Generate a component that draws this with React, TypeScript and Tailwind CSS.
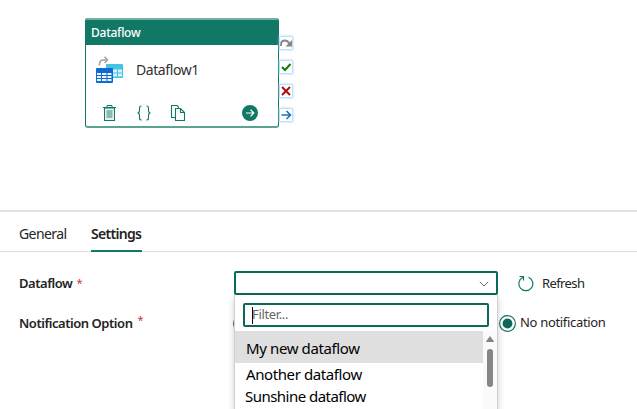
import type { ReactNode } from 'react';

const GREEN = '#117865';

function Port({ children }: { children: ReactNode }) {
  return (
    <div className="flex h-[12px] w-[12px] items-center justify-center bg-white shadow-[0_0_2px_1px_#a3d0f7]">
      <svg className="shrink-0" width="12" height="12" viewBox="0 0 12 12" fill="none">{children}</svg>
    </div>
  );
}

function DataflowIcon() {
  return (
    <svg width="30" height="28" viewBox="0 0 30 28" fill="none">
      <path d="M4.500 10.500V9Q4.500 5 8.500 5H12" stroke="#a3a3a3" strokeWidth="1.600" />
      <path d="M9.500 1.800 12.500 5l-3 3" stroke="#a3a3a3" strokeWidth="1.500" />
      <rect x="11" y="9" width="17" height="14" rx="1" fill="#45c3e6" />
      <path d="M18 14.500h4v3h-4zM23 14.500h4v3h-4zM18 18.500h4v3h-4zM23 18.500h4v3h-4z" fill="#d5f3fb" />
      <rect x="1" y="13" width="17" height="15" rx="1" fill="#0f6bd0" />
      <path d="M2 18h4v2H2zM7 18h4.500v2H7zM12.500 18h4v2h-4zM2 21h4v2H2zM7 21h4.500v2H7zM12.500 21h4v2h-4zM2 24h4v2H2zM7 24h4.500v2H7zM12.500 24h4v2h-4z" fill="#edf6ff" />
    </svg>
  );
}

function ActivityCard() {
  return (
    <div className="h-[110px] w-[194px] overflow-hidden rounded-[3px] border-x border-b-2 border-x-[#117865] border-b-[#5ba294] bg-white">
      <div className="h-[27px] border-t-2 border-[#75b0a4] bg-[#117865] pl-[5px] text-[12px] font-medium leading-[26px] tracking-[-0.25px] text-white">
        Dataflow
      </div>
      <div className="flex h-[49px] items-start pl-[9px] pt-[10px]">
        <DataflowIcon />
        <span className="ml-[11px] mt-[5px] text-[14px] leading-[20px] tracking-[-0.42px] text-[#323130]">Dataflow1</span>
      </div>
      <div className="flex h-[38px] items-center pl-[16px]">
        <svg width="15" height="18" viewBox="0 0 15 18" fill="none" stroke={GREEN}>
          <path d="M1 3.500h13M5 3V1.500h5V3" />
          <rect x="2.500" y="4" width="10" height="12.500" fill="#e4f1ee" />
          <rect x="4.500" y="6" width="6" height="8" fill="#88bcb2" stroke="none" />
        </svg>
        <svg className="ml-[19px]" width="16" height="18" viewBox="0 0 16 18" fill="none" stroke={GREEN} strokeWidth="1.100">
          <path d="M5.500 2Q3.500 2 3.500 4V6.500Q3.500 9 1.500 9Q3.500 9 3.500 11.500V14Q3.500 16 5.500 16M10.500 2Q12.500 2 12.500 4V6.500Q12.500 9 14.500 9Q12.500 9 12.500 11.500V14Q12.500 16 10.500 16" />
        </svg>
        <svg className="ml-[18px]" width="16" height="18" viewBox="0 0 16 18" fill="none" stroke={GREEN} strokeWidth="1.100">
          <path d="M5 13.500H1.500v-12H7l2 2" />
          <path d="M5.500 4.500h5l4 4v8h-9zM10.500 4.500v4h4" fill="white" />
        </svg>
        <svg className="ml-[56px]" width="16" height="16" viewBox="0 0 16 16" fill="none">
          <circle cx="8" cy="8" r="8" fill={GREEN} />
          <path d="M4 8h7.500M8.500 4.700 11.800 8l-3.300 3.300" stroke="white" strokeWidth="1.200" />
        </svg>
      </div>
    </div>
  );
}

function Label({ children, star }: { children: string; star: string }) {
  return (
    <div className="flex w-[215px] shrink-0 text-[13px] font-semibold leading-[20px] tracking-[-0.46px] text-[#242424]">
      {children}
      <span className={star}>*</span>
    </div>
  );
}

function Dropdown() {
  return (
    <div className="absolute left-0 top-[24px] h-[114px] w-[264px] border-x border-[#d0d0d0] bg-white pt-[8px] shadow-[0_3px_7px_rgba(0,0,0,0.2)]">
      <div className="ml-[8px] flex h-[24px] w-[246px] items-center rounded-[2px] border-2 border-[#0c695a] pl-[7px] text-[13px] text-[#666]">
        <span className="h-[17px] w-px bg-black" />
        <span className="-ml-px tracking-[-0.35px]">Filter...</span>
      </div>
      <div className="mt-[4px] flex">
        <div className="w-[248px] text-[15px] text-black">
          <div className="h-[32px] bg-[#dfdfdf] pl-[11px] leading-[35px] tracking-[-0.38px]">My new dataflow</div>
          <div className="h-[23px] pl-[11px] leading-[23px] tracking-[-0.4px]">Another dataflow</div>
          <div className="h-[23px] pl-[10px] leading-[21px] tracking-[-0.53px]">Sunshine dataflow</div>
        </div>
        <div className="flex w-[14px] flex-col items-center bg-[#fafafa] pt-[5px]">
          <svg width="8" height="6" viewBox="0 0 8 6"><path d="M4 0 8 5.500Q8 6 7.500 6H.5Q0 6 0 5.500z" fill="#858585" /></svg>
          <div className="mt-[7px] h-[38px] w-[6px] rounded-full bg-[#858585]" />
        </div>
      </div>
    </div>
  );
}

function Radio({ checked = false }: { checked?: boolean }) {
  return (
    <svg className="shrink-0" width="17" height="17" viewBox="0 0 17 17" fill="none">
      <circle cx="8.500" cy="8.500" r="7.900" stroke={checked ? '#0c695a' : '#555'} strokeWidth="1.100" />
      {checked && <circle cx="8.500" cy="8.500" r="4.900" fill="#0c695a" />}
    </svg>
  );
}

export default function App() {
  return (
    <div className="h-[409px] w-[637px] overflow-hidden whitespace-nowrap bg-white font-['Noto_Sans','Open_Sans',sans-serif]">
      <div className="relative h-[210px]">
        <div className="absolute left-[85px] top-[18px] flex">
          <ActivityCard />
          <div className="ml-[1px] flex flex-col gap-[12px] pt-[19px]">
            <Port>
              <path d="M1 9V7.500C1 5 2.500 3.500 5 3.500S8.500 5 9.500 7" stroke="#858585" strokeWidth="1.800" />
              <path d="M12 3v6.500H5.500z" fill="#858585" />
            </Port>
            <Port><path d="m2 6 3 3 5.500-6" stroke="#107c10" strokeWidth="2" /></Port>
            <Port><path d="m2 2 8 8m0-8-8 8" stroke="#b00c14" strokeWidth="2" /></Port>
            <Port><path d="M1.500 6h9M6.500 2l4 4-4 4" stroke="#1a72c4" strokeWidth="1.600" /></Port>
          </div>
        </div>
      </div>
      <div className="flex h-[42px] items-stretch border-b border-t-2 border-b-[#dedede] border-t-[#e0e0e0] pl-[19px] text-[14px] leading-[44px] text-[#242424]">
        <div className="w-[72px] tracking-[-0.6px]">General</div>
        <div className="relative h-[40px] w-[51px] border-b-2 border-[#117865] font-semibold tracking-[-0.7px]">Settings</div>
      </div>
      <div className="relative z-10 flex h-[62px] items-center pl-[19px]">
        <Label star="ml-[4px] text-[11px] font-normal text-[#d13438]">Dataflow</Label>
        <div className="relative flex h-[24px] w-[264px] items-center justify-end rounded-[2px] border-2 border-[#0c695a] bg-white pr-[7px]">
          <svg className="mt-[2px]" width="10" height="6" viewBox="0 0 10 6" fill="none"><path d="m.8.8 4.200 4.200L9.200.8" stroke="#666" /></svg>
          <div className="absolute -left-[2px] -top-[2px]"><Dropdown /></div>
        </div>
        <svg className="ml-[20px]" width="16" height="17" viewBox="0 0 16 17" fill="none" stroke="#117865" strokeWidth="1.200">
          <path d="M10.500 2.200A7 7 0 1 1 5 2.300M1.500 1.500H5.500v4" />
        </svg>
        <span className="ml-[8px] text-[13px] leading-[20px] tracking-[-0.6px] text-[#242424]">Refresh</span>
      </div>
      <div className="-mt-px flex h-[20px] items-center pl-[19px]">
        <Label star="ml-[5px] -mt-[3px] text-[11px] font-normal text-[#d13438]">Notification Option</Label>
        <div className="-ml-[1px] flex w-[266px]"><Radio /></div>
        <Radio checked />
        <span className="ml-[4px] text-[13px] tracking-[-0.32px] text-[#242424]">No notification</span>
      </div>
    </div>
  );
}
